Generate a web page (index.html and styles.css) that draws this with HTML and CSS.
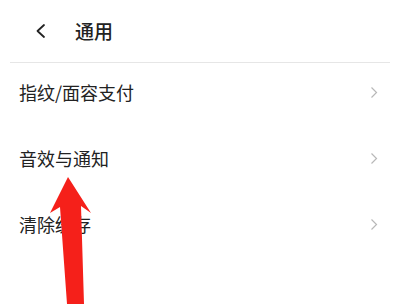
FILE: index.html
```html
<!DOCTYPE html>
<html lang="zh">

<head>
    <meta charset="UTF-8">
    <meta name="viewport" content="width=device-width, initial-scale=1.0">
    <title>通用</title>
    <link rel="stylesheet" href="styles.css">
</head>

<body>
    <div class="page">
        <div class="header">
            <svg class="back" width="12" height="16" viewBox="0 0 12 16">
                <path d="M9 2 L2.5 8 L9 14" fill="none" stroke="#222" stroke-width="1.8" stroke-linecap="round" stroke-linejoin="round"/>
            </svg>
            <span class="title">通用</span>
        </div>
        <div class="divider"></div>
        <div class="list">
            <div class="row">
                <span>指纹/面容支付</span>
                <svg class="more" width="8" height="13" viewBox="0 0 8 13">
                    <path d="M1.5 1.5 L6.5 6.5 L1.5 11.5" fill="none" stroke="#b8b8b8" stroke-width="1.2"/>
                </svg>
            </div>
            <div class="row">
                <span>音效与通知</span>
                <svg class="more" width="8" height="13" viewBox="0 0 8 13">
                    <path d="M1.5 1.5 L6.5 6.5 L1.5 11.5" fill="none" stroke="#b8b8b8" stroke-width="1.2"/>
                </svg>
            </div>
            <div class="row">
                <span>清除缓存</span>
                <svg class="more" width="8" height="13" viewBox="0 0 8 13">
                    <path d="M1.5 1.5 L6.5 6.5 L1.5 11.5" fill="none" stroke="#b8b8b8" stroke-width="1.2"/>
                </svg>
            </div>
        </div>

        <!-- red pointer arrow drawn over the list -->
        <svg class="arrow" width="60" height="130" viewBox="0 0 60 130">
            <path d="M18 0 L41 36 L31 29 L34 127 L17 127 L10 30 L0 36 Z" fill="#f5201a"/>
        </svg>
    </div>
</body>

</html>
```

FILE: styles.css
```css
body {
    margin: 0;
    background: #fff;
    font-family: "Noto Sans CJK SC", "Noto Sans", sans-serif;
    color: #222;
}

.page {
    position: relative;
    width: 400px;
    height: 304px;
    overflow: hidden;
}

.header {
    height: 62px;
    display: flex;
    align-items: center;
    padding-left: 35px;
}

.back {
    display: block;
    margin-top: -1px;
}

.title {
    margin-left: 28px;
    font-size: 19px;
    font-weight: 500;
    color: #222;
    margin-top: -2px;
}

.divider {
    height: 1px;
    margin: 0 10px;
    background: #e6e6e6;
}

.list {
    margin-top: -4px;
    padding: 0 22px 0 19px;
}

.row {
    height: 66px;
    display: flex;
    align-items: center;
    justify-content: space-between;
    font-size: 18px;
    color: #222;
}

.more {
    display: block;
}

.arrow {
    position: absolute;
    left: 50px;
    top: 177px;
}
```
